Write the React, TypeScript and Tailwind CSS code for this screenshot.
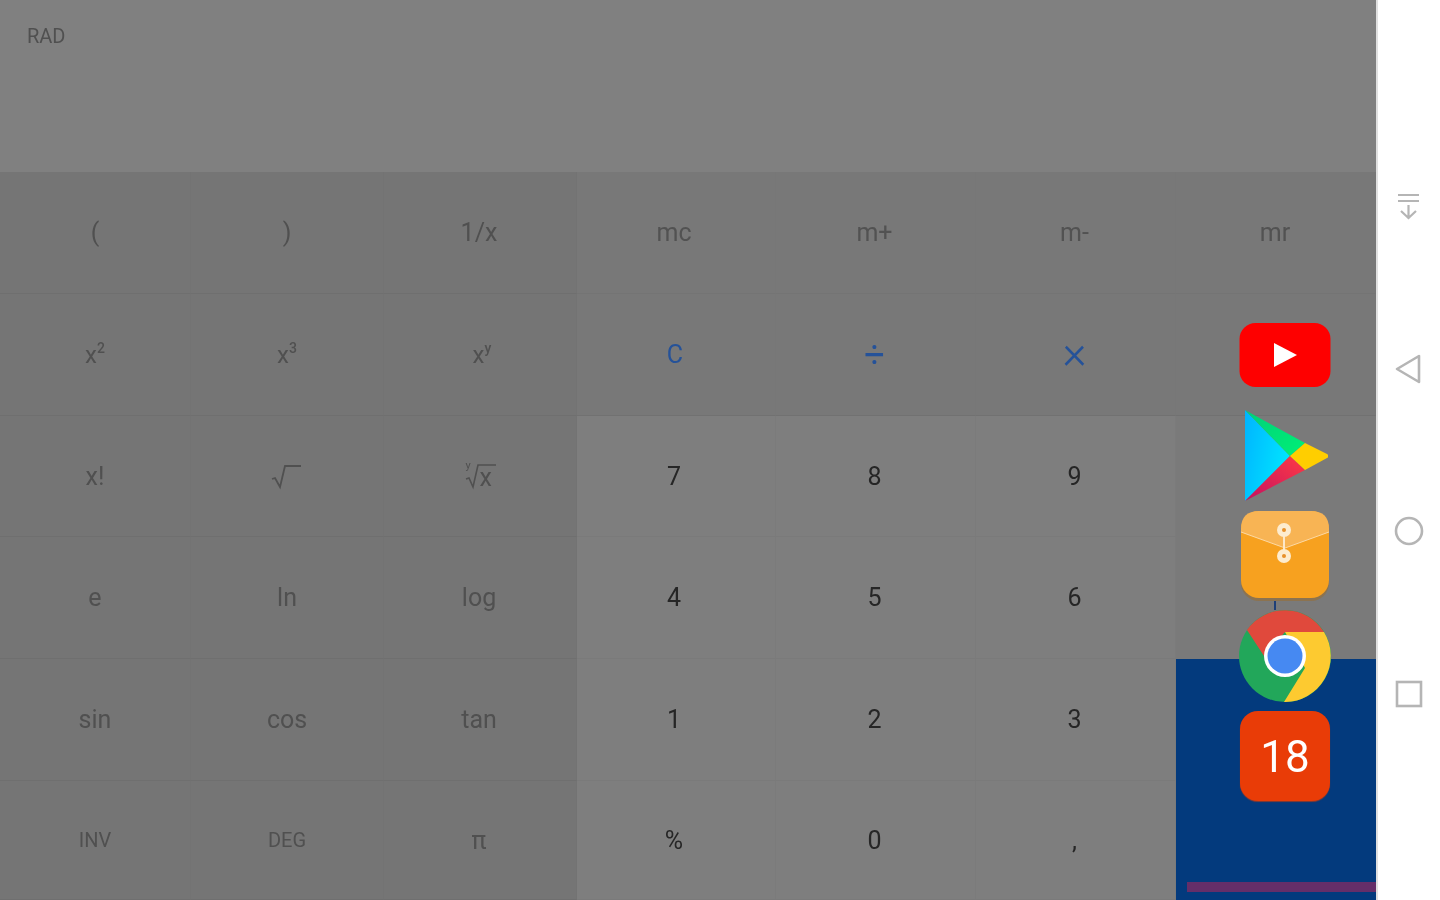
import React from "react";

type Cell = { label: React.ReactNode; tone: "sci" | "top" | "digit" | "op" | "side"; size?: string };

const font = { fontFamily: 'Roboto, "Liberation Sans", sans-serif' };

function Pow({ base, exp }: { base: string; exp: string }) {
  return (
    <span className="inline-flex items-start leading-none">
      <span className="text-[24px] leading-[24px]">{base}</span>
      <span className="text-[14px] leading-[14px] -mt-[2px] font-medium">{exp}</span>
    </span>
  );
}

function Sqrt() {
  return (
    <svg width="32" height="28" viewBox="0 0 32 28" fill="none" stroke="#505050" strokeWidth="1.8">
      <path d="M1 17l3-1 5 9 5-21h16" />
    </svg>
  );
}

function Root() {
  return (
    <span className="relative inline-flex w-[32px] h-[28px] ml-[3px] text-[#505050]">
      <svg className="absolute left-0 top-0" width="32" height="28" viewBox="0 0 32 28" fill="none" stroke="#505050" strokeWidth="1.6">
        <path d="M1 17l3-1 4 9 5-22h18" />
      </svg>
      <span className="absolute left-[1px] -top-[3px] text-[11px] leading-[14px]">y</span>
      <span className="absolute left-[15px] top-[3px] text-[25px] leading-[25px]">x</span>
    </span>
  );
}

const rows: Cell[][] = [
  [
    { label: "(", tone: "sci" },
    { label: ")", tone: "sci" },
    { label: "1/x", tone: "sci" },
    { label: "mc", tone: "top" },
    { label: "m+", tone: "top" },
    { label: "m-", tone: "top" },
    { label: "mr", tone: "top" },
  ],
  [
    { label: <Pow base="x" exp="2" />, tone: "sci" },
    { label: <Pow base="x" exp="3" />, tone: "sci" },
    { label: <span className="ml-[6px]"><Pow base="x" exp="y" /></span>, tone: "sci" },
    { label: <span className="ml-[2px]">C</span>, tone: "op" },
    { label: "÷", tone: "op", size: "text-[36px]" },
    { label: <span className="-mt-[6px]">×</span>, tone: "op", size: "text-[46px] font-light" },
    { label: "", tone: "op" },
  ],
  [
    { label: "x!", tone: "sci" },
    { label: <Sqrt />, tone: "sci" },
    { label: <Root />, tone: "sci" },
    { label: "7", tone: "digit" },
    { label: "8", tone: "digit" },
    { label: "9", tone: "digit" },
    { label: "", tone: "side" },
  ],
  [
    { label: "e", tone: "sci" },
    { label: "ln", tone: "sci" },
    { label: "log", tone: "sci" },
    { label: "4", tone: "digit" },
    { label: "5", tone: "digit" },
    { label: "6", tone: "digit" },
    { label: <span className="block w-[2px] h-[14px] mt-[10px] bg-[#1e3f78]" />, tone: "side" },
  ],
  [
    { label: "sin", tone: "sci" },
    { label: "cos", tone: "sci" },
    { label: "tan", tone: "sci" },
    { label: "1", tone: "digit" },
    { label: "2", tone: "digit" },
    { label: "3", tone: "digit" },
    { label: "", tone: "side" },
  ],
  [
    { label: "INV", tone: "sci", size: "text-[20px]" },
    { label: "DEG", tone: "sci", size: "text-[20px]" },
    { label: "π", tone: "sci" },
    { label: "%", tone: "digit" },
    { label: "0", tone: "digit" },
    { label: ",", tone: "digit" },
    { label: "", tone: "side" },
  ],
];

const toneClass: Record<Cell["tone"], string> = {
  sci: "bg-[#757575] text-[#505050] border-b-[#6f6f6f] border-r-[#737373]",
  top: "bg-[#787878] text-[#525252] border-b-[#747474] border-r-[#777777]",
  op: "bg-[#787878] text-[#255299] border-b-[#717171] border-r-[#777777]",
  digit: "bg-[#7e7e7e] text-[#262626] border-b-[#7a7a7a] border-r-[#7b7b7b]",
  side: "bg-[#7a7a7a] text-[#262626] border-b-[#7a7a7a] border-r-[#7a7a7a]",
};

const colPad = ["", "", "pr-[2px]", "pr-[4px]", "pr-[2px]", "pr-[2px]", "pr-[1px]"];

function YouTube() {
  return (
    <svg width="92" height="66" viewBox="0 0 92 66">
      <rect x="0.5" y="1" width="91" height="64" rx="16" fill="#fe0000" />
      <path d="M35 21v24l23-12z" fill="#fff" />
    </svg>
  );
}

function Play() {
  return (
    <svg width="86" height="94" viewBox="0 0 86 94">
      <defs>
        <linearGradient id="pb" x1="0" y1="0" x2="1" y2="0.4">
          <stop offset="0" stopColor="#00b4ff" />
          <stop offset="1" stopColor="#00e3ff" />
        </linearGradient>
        <linearGradient id="pg" x1="0" y1="0" x2="1" y2="1">
          <stop offset="0" stopColor="#00d07a" />
          <stop offset="1" stopColor="#00f076" />
        </linearGradient>
        <linearGradient id="pr" x1="1" y1="0" x2="0" y2="1">
          <stop offset="0" stopColor="#ff3a44" />
          <stop offset="1" stopColor="#c31162" />
        </linearGradient>
      </defs>
      <path d="M3 1v91l45-45z" fill="url(#pb)" />
      <path d="M3 1l60 33-15 13z" fill="url(#pg)" />
      <path d="M3 92l60-31-15-14z" fill="url(#pr)" />
      <path d="M63 34l22 11q3 2 0 4L63 61 48 47z" fill="#ffce00" />
    </svg>
  );
}

function Envelope() {
  return (
    <svg width="90" height="92" viewBox="0 0 90 92">
      <rect x="1" y="3" width="88" height="88" rx="18" fill="#8c7350" />
      <rect x="1" y="1" width="88" height="87" rx="18" fill="#f7a11f" />
      <path d="M1 22V19Q1 1 19 1h52q18 0 18 18v3L45 38z" fill="#f8b454" />
      <path d="M1 22l44 16 44-16" fill="none" stroke="#fcd9a5" strokeWidth="1" />
      <path d="M44 20v26" stroke="#fde8c8" strokeWidth="2" />
      <circle cx="44" cy="20" r="7" fill="#fdeccf" />
      <circle cx="44" cy="20" r="2" fill="#e8912a" />
      <circle cx="44" cy="46" r="7" fill="#fdeccf" />
      <circle cx="44" cy="46" r="2" fill="#e8912a" />
    </svg>
  );
}

function Chrome() {
  return (
    <svg width="92" height="92" viewBox="0 0 92 92">
      <circle cx="46" cy="46" r="46" fill="#22a75a" />
      <path d="M8 20A46 46 0 0 1 85 22H46L25 46z" fill="#e0493c" />
      <path d="M85 22A46 46 0 0 1 45 92L66 58 46 22z" fill="#fdca30" />
      <circle cx="46" cy="46" r="21" fill="#fff" />
      <circle cx="46" cy="46" r="17.5" fill="#4689f2" />
    </svg>
  );
}

function Calendar() {
  return (
    <div className="w-[90px] h-[90px] rounded-[18px] bg-[#e93c07] shadow-[0_1px_1px_#8a3a30] flex items-center justify-center text-white text-[44px] leading-none pt-[1px]">
      18
    </div>
  );
}

export default function App() {
  return (
    <div className="flex w-[1440px] h-[900px] overflow-hidden bg-white" style={font}>
      <main className="relative w-[1376px] h-[900px] bg-[#808080] flex flex-col">
        <header className="h-[172px] px-[27px] pt-[26px] text-[20px] leading-[21px] text-[#505050] blur-[0.5px]">RAD</header>
        <div className="relative grid grid-cols-[191px_193px_193px_199px_200px_200px_200px] grid-rows-[122px_122px_121px_122px_122px_119px] flex-1 blur-[0.6px]">
          {rows.flatMap((row, r) =>
            row.map((cell, c) => (
              <div
                key={`${r}-${c}`}
                className={`flex items-center justify-center border-b border-r leading-none ${toneClass[cell.tone]} ${colPad[c]} ${cell.size ?? "text-[25px]"}`}
              >
                {cell.label}
              </div>
            ))
          )}
          <div className="absolute right-0 bottom-0 w-[200px] h-[241px] bg-[#033a7d] flex items-end justify-end pb-[8px]">
            <div className="w-[189px] h-[10px] bg-[#652e69]" />
          </div>
        </div>
        <aside className="absolute left-[1239px] top-[322px] w-[92px] flex flex-col items-center blur-[0.5px]">
          <YouTube />
          <div className="mt-[21px]"><Play /></div>
          <div className="mt-[7px]"><Envelope /></div>
          <div className="mt-[8px]"><Chrome /></div>
          <div className="mt-[9px]"><Calendar /></div>
        </aside>
      </main>
      <nav className="relative w-[64px] h-[900px] bg-white border-l-[2px] border-[#e0e0e0] blur-[0.4px]">
        <svg className="absolute left-[18px] top-[190px]" width="26" height="32" viewBox="0 0 26 32" fill="none" stroke="#b5b5b5" strokeWidth="2.2">
          <path d="M2 5h21M2 11h21M12.5 15v13M5 21l7.5 7 7.5-7" />
        </svg>
        <svg className="absolute left-[16px] top-[353px]" width="28" height="32" viewBox="0 0 28 32" fill="none" stroke="#b5b5b5" strokeWidth="2.6" strokeLinejoin="round">
          <path d="M25 3v26L3 16z" />
        </svg>
        <svg className="absolute left-[16px] top-[516px]" width="30" height="30" viewBox="0 0 30 30" fill="none" stroke="#b5b5b5" strokeWidth="2.6">
          <circle cx="15" cy="15" r="13" />
        </svg>
        <svg className="absolute left-[17px] top-[680px]" width="28" height="28" viewBox="0 0 28 28" fill="none" stroke="#b5b5b5" strokeWidth="2.6">
          <rect x="2" y="2" width="24" height="24" />
        </svg>
      </nav>
    </div>
  );
}
